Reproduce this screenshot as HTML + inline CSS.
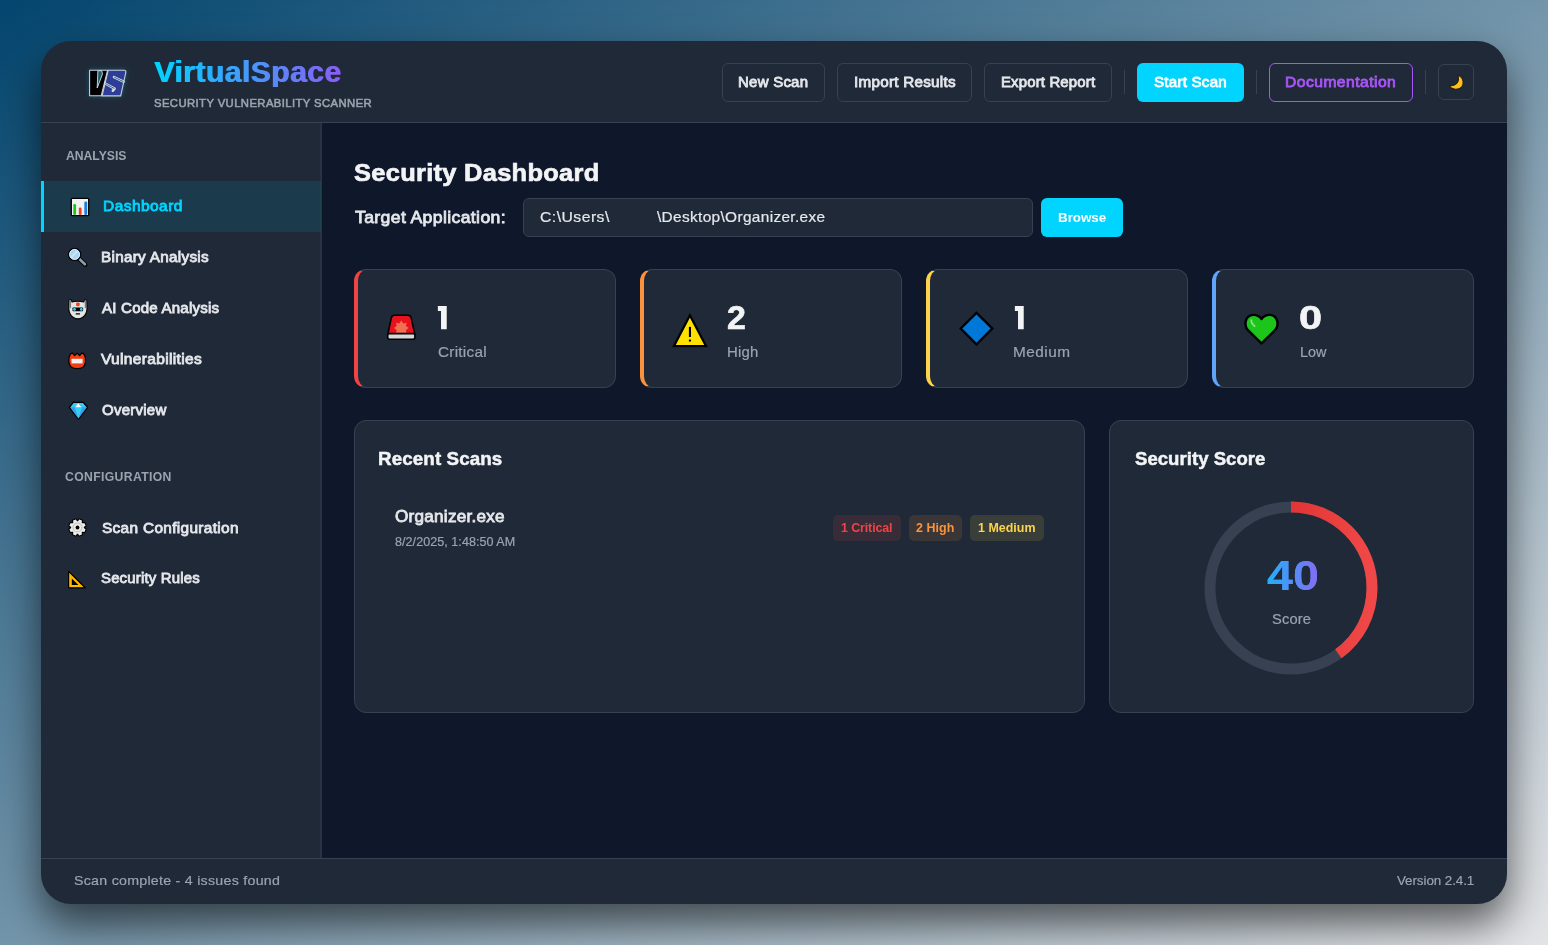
<!DOCTYPE html>
<html><head><meta charset="utf-8"><style>
html,body{margin:0;padding:0;}
body{width:1548px;height:945px;overflow:hidden;position:relative;background:linear-gradient(to bottom right,#03456e,#e3e4e6);font-family:"Liberation Sans",sans-serif;}
.win{position:absolute;left:41px;top:41px;width:1466px;height:863px;border-radius:30px;background:#1f2937;box-shadow:0 20px 40px rgba(0,0,0,0.6);overflow:hidden;}
.r{position:absolute;}
.t{position:absolute;white-space:pre;will-change:transform;}
.i{position:absolute;overflow:visible;}
</style></head><body>
<div class="win">
<div class="r" style="left:0px;top:81px;width:1466px;height:1px;background:#374151"></div>
<div class="r" style="left:281px;top:82px;width:1185px;height:735px;background:#0f172a"></div>
<div class="r" style="left:279px;top:82px;width:1px;height:735px;background:#27313f"></div>
<div class="r" style="left:280px;top:82px;width:1px;height:735px;background:#2a3344"></div>
<div class="r" style="left:0px;top:817px;width:1466px;height:1px;background:#374151"></div>
<div class="r" style="left:0px;top:140px;width:280px;height:51px;background:rgba(0,212,255,0.1)"></div>
<div class="r" style="left:0px;top:140px;width:3px;height:51px;background:#00d4ff"></div>
<div class="r" style="left:681px;top:22px;width:103px;height:39px;box-sizing:border-box;border:1px solid #374151;border-radius:6px;"></div>
<div class="r" style="left:796px;top:22px;width:135px;height:39px;box-sizing:border-box;border:1px solid #374151;border-radius:6px;"></div>
<div class="r" style="left:943px;top:22px;width:128px;height:39px;box-sizing:border-box;border:1px solid #374151;border-radius:6px;"></div>
<div class="r" style="left:1083px;top:29px;width:1px;height:24px;background:#374151"></div>
<div class="r" style="left:1096px;top:22px;width:107px;height:39px;background:#00d4ff;border-radius:6px"></div>
<div class="r" style="left:1215px;top:29px;width:1px;height:24px;background:#374151"></div>
<div class="r" style="left:1228px;top:22px;width:144px;height:39px;box-sizing:border-box;border:1px solid #a855f7;border-radius:6px"></div>
<div class="r" style="left:1384px;top:29px;width:1px;height:24px;background:#374151"></div>
<div class="r" style="left:1397px;top:23px;width:36px;height:36px;box-sizing:border-box;border:1px solid #374151;border-radius:6px;"></div>
<div class="r" style="left:482px;top:157px;width:510px;height:39px;box-sizing:border-box;background:#1f2937;border:1px solid #374151;border-radius:6px"></div>
<div class="r" style="left:1000px;top:157px;width:82px;height:39px;background:#00d4ff;border-radius:6px"></div>
<div class="r" style="left:313px;top:228px;width:262px;height:119px;box-sizing:border-box;background:#1f2937;border:1px solid #374151;border-left:4px solid #ef4444;border-radius:12px"></div>
<div class="r" style="left:599px;top:228px;width:262px;height:119px;box-sizing:border-box;background:#1f2937;border:1px solid #374151;border-left:4px solid #fb923c;border-radius:12px"></div>
<div class="r" style="left:885px;top:228px;width:262px;height:119px;box-sizing:border-box;background:#1f2937;border:1px solid #374151;border-left:4px solid #fcd34d;border-radius:12px"></div>
<div class="r" style="left:1171px;top:228px;width:262px;height:119px;box-sizing:border-box;background:#1f2937;border:1px solid #374151;border-left:4px solid #60a5fa;border-radius:12px"></div>
<div class="r" style="left:313px;top:379px;width:731px;height:293px;box-sizing:border-box;background:#1f2937;border:1px solid #374151;border-radius:12px"></div>
<div class="r" style="left:1068px;top:379px;width:365px;height:293px;box-sizing:border-box;background:#1f2937;border:1px solid #374151;border-radius:12px"></div>
<div class="r" style="left:792px;top:474px;width:68px;height:26px;background:rgba(239,68,68,0.12);border-radius:5px"></div>
<div class="r" style="left:868px;top:474px;width:53px;height:26px;background:rgba(251,146,60,0.12);border-radius:5px"></div>
<div class="r" style="left:929px;top:474px;width:74px;height:26px;background:rgba(252,211,77,0.12);border-radius:5px"></div>
<svg class="r" style="left:1160.4px;top:456.9px" width="180" height="180" viewBox="0 0 180 180">
<defs><linearGradient id="rg" x1="0" y1="0" x2="0" y2="1"><stop offset="0" stop-color="#d42222"/><stop offset="1" stop-color="#f04848"/></linearGradient></defs>
<circle cx="90" cy="90" r="81" fill="none" stroke="#374151" stroke-width="11"/>
<circle cx="90" cy="90" r="81" fill="none" stroke="url(#rg)" stroke-width="11" stroke-dasharray="203.58 508.94" transform="rotate(-90 90 90)"/>
</svg>
<svg class="r" style="left:395.64px;top:264.94px" width="11" height="24" viewBox="0 0 11 24"><path d="M0.86 5.09V0H9.73V23.36H4.03V5.09Z" fill="#f3f4f6"/></svg>
<svg class="r" style="left:972.74px;top:265.04px" width="11" height="24" viewBox="0 0 11 24"><path d="M0.86 5.09V0H9.73V23.36H4.03V5.09Z" fill="#f3f4f6"/></svg>
<svg class="i" style="left:43px;top:26px;overflow:visible" width="48" height="33" viewBox="0 0 48 33">
<defs><filter id="glow" x="-50%" y="-50%" width="200%" height="200%"><feGaussianBlur stdDeviation="2.5" result="b"/><feFlood flood-color="#00d4ff" flood-opacity="0.3"/><feComposite in2="b" operator="in"/><feMerge><feMergeNode/><feMergeNode in="SourceGraphic"/></feMerge></filter></defs>
<g filter="url(#glow)">
<path d="M5.6 3.2 L23.6 3.2 L17.2 28.8 L5.6 28.8 Z" fill="#000" stroke="#c9ced6" stroke-width="1.1" stroke-linejoin="round"/>
<path d="M13.9 3.7 L17.7 3.7 L18.5 6.9 L13.2 21.0 Z" fill="#1b5d6c" stroke="#d8dde4" stroke-width="0.9" stroke-linejoin="round"/>
<path d="M24.2 3.2 L40.0 3.2 Q42.3 3.2 41.8 5.5 L36.7 28.9 L18.1 28.9 Z" fill="#2f3e98" stroke="#c9ced6" stroke-width="1.1" stroke-linejoin="round"/>
<path d="M30.0 10.1 L39.6 14.7" stroke="#d8dde4" stroke-width="2.5" stroke-linecap="round"/>
<path d="M30.2 10.2 L39.4 14.6" stroke="#17606e" stroke-width="0.9"/>
<path d="M21.2 16.5 L30.6 21.6 L28.8 23.8" stroke="#d8dde4" stroke-width="2.5" stroke-linecap="round" fill="none" stroke-linejoin="round"/>
<path d="M21.4 16.6 L30.4 21.5" stroke="#17606e" stroke-width="0.9"/>
</g></svg>
<svg class="i" style="left:29px;top:155.5px;" width="20" height="20" viewBox="0 0 20 20"><rect x="1.3" y="1.3" width="17.4" height="17.4" rx="1" fill="#f2f2f2" stroke="#000" stroke-width="1.3"/>
<rect x="3.3" y="7" width="2.8" height="11" rx="1.2" fill="#22c31b"/>
<rect x="8.8" y="10.6" width="2.8" height="7.4" rx="1.2" fill="#f0401e"/>
<rect x="14.3" y="4.6" width="2.9" height="13.4" rx="1.2" fill="#1e7ee0"/></svg>
<svg class="i" style="left:26px;top:206px;" width="20" height="20" viewBox="0 0 20 20"><path d="M12.2 11.8 L18.2 17.6" stroke="#000" stroke-width="4.6" stroke-linecap="round"/>
<path d="M12.4 12 L17.9 17.3" stroke="#8e9ea6" stroke-width="2.6" stroke-linecap="round"/>
<circle cx="7.6" cy="7.4" r="6.0" fill="#a9d6f5" stroke="#000" stroke-width="1.4"/>
<circle cx="7.6" cy="7.4" r="5.0" fill="none" stroke="#f4f4f4" stroke-width="0.9"/>
<path d="M4.3 10.2 L10.6 3.9" stroke="#c6e6fa" stroke-width="2.2"/></svg>
<svg class="i" style="left:27px;top:257.5px;" width="20" height="20" viewBox="0 0 20 20"><path d="M1.0 1.6 Q1.4 0.3 2.6 0.5 Q3.6 0.8 3.9 2.9 Q9.9 1.5 15.9 2.9 Q16.2 0.8 17.2 0.5 Q18.4 0.3 18.8 1.6 L19.0 9.6 Q18.8 15.6 14.8 18.3 Q12.4 19.9 9.9 19.9 Q7.4 19.9 5.0 18.3 Q1.0 15.6 0.8 9.6 Z" fill="#e4e4e4" stroke="#000" stroke-width="1.1" stroke-linejoin="round"/>
<path d="M2.3 1.6 L2.3 8.6 M17.5 1.6 L17.5 8.6" stroke="#7a7a7a" stroke-width="1.5" stroke-linecap="round"/>
<rect x="8.1" y="3.4" width="3.6" height="3.9" rx="1.2" fill="#f0461a"/>
<rect x="4.5" y="8.5" width="10.6" height="3.8" rx="0.8" fill="#000"/>
<circle cx="6.5" cy="10.4" r="1.4" fill="#3ed2f6"/>
<circle cx="13.3" cy="10.4" r="1.4" fill="#3ed2f6"/>
<rect x="7.6" y="14.3" width="4.5" height="1.3" rx="0.6" fill="#000"/></svg>
<svg class="i" style="left:26px;top:310.5px;" width="20" height="20" viewBox="0 0 20 20"><path d="M2.0 6.0 Q3.0 1.2 5.5 1.2 L7.5 3.5 L10.1 1.2 L12.7 3.5 L14.7 1.2 Q17.4 1.2 18.4 6.0 Q19.2 12.2 16.2 15.0 Q13.8 16.6 10.2 16.6 Q6.6 16.6 4.2 15.0 Q1.2 12.2 2.0 6.0 Z" fill="#f23c12" stroke="#000" stroke-width="1.2" stroke-linejoin="round"/>
<rect x="4.5" y="6.8" width="11.1" height="4.6" fill="#f2f2f2"/></svg>
<svg class="i" style="left:26.5px;top:359.5px;" width="21" height="20" viewBox="0 0 21 20"><path d="M5.3 1.4 L15.3 1.4 L19.5 6.25 L10.4 18.2 L1.4 6.25 Z" fill="#34cdf4" stroke="#000" stroke-width="1.4" stroke-linejoin="round"/>
<path d="M2.0 6.25 L18.9 6.25 L10.4 17.5 Z" fill="#3a9be6"/>
<path d="M6.6 6.25 L14.2 6.25 L10.4 17.2 Z" fill="#33d0f5"/>
<path d="M7.4 6.25 L10.2 2.3 L13.2 6.25 Z" fill="#ffffff"/></svg>
<svg class="i" style="left:26.799999999999997px;top:476.79999999999995px;" width="19" height="19" viewBox="0 0 19 19"><polygon points="16.40,9.73 18.27,11.03 16.78,14.62 14.54,14.22 14.22,14.54 14.62,16.78 11.03,18.27 9.73,16.40 9.27,16.40 7.97,18.27 4.38,16.78 4.78,14.54 4.46,14.22 2.22,14.62 0.73,11.03 2.60,9.73 2.60,9.27 0.73,7.97 2.22,4.38 4.46,4.78 4.78,4.46 4.38,2.22 7.97,0.73 9.27,2.60 9.73,2.60 11.03,0.73 14.62,2.22 14.22,4.46 14.54,4.78 16.78,4.38 18.27,7.97 16.40,9.27" fill="#ececec" stroke="#000" stroke-width="1.1" stroke-linejoin="round"/>
<circle cx="9.5" cy="9.5" r="4.4" fill="none" stroke="#c8c8c8" stroke-width="1.4"/>
<circle cx="9.5" cy="9.5" r="1.9" fill="#000"/></svg>
<svg class="i" style="left:26px;top:528.5px;" width="20" height="20" viewBox="0 0 20 20"><path d="M1.6 1.4 L18.2 17.8 L1.6 17.8 Z" fill="#ffb800" stroke="#000" stroke-width="1.2" stroke-linejoin="round"/>
<path d="M4.8 8.6 L11.4 14.9 L4.8 14.9 Z" fill="#000"/></svg>
<svg class="i" style="left:344.2px;top:273px;" width="32" height="28" viewBox="0 0 32 28"><path d="M2.7 20.6 L6.4 3.6 Q6.9 1.2 9.6 1.2 L22.9 1.2 Q25.6 1.2 26.1 3.6 L29.9 20.6 Z" fill="#e8121f" stroke="#000" stroke-width="1.6" stroke-linejoin="round"/>
<polygon points="16.30,6.60 18.21,9.38 21.53,8.77 20.92,12.09 23.70,14.00 20.92,15.91 21.53,19.23 18.21,18.62 16.30,21.40 14.39,18.62 11.07,19.23 11.68,15.91 8.90,14.00 11.68,12.09 11.07,8.77 14.39,9.38" fill="#ef7152"/>
<rect x="2.7" y="19.6" width="27.2" height="5.6" rx="1.6" fill="#d6d8da" stroke="#000" stroke-width="1.6"/></svg>
<svg class="i" style="left:631px;top:271.5px;" width="36" height="36" viewBox="0 0 36 36"><path d="M17.9 0.3 L35.5 34.0 L0.4 34.0 Z" fill="#000" stroke="#000" stroke-width="0.3" stroke-linejoin="round"/>
<path d="M17.9 4.7 L32.2 31.9 L3.8 31.9 Z" fill="#ffe100"/>
<rect x="16.9" y="13.9" width="2.1" height="10.1" fill="#000"/>
<rect x="16.9" y="26.6" width="2.1" height="1.9" fill="#000"/></svg>
<svg class="i" style="left:917.5px;top:270px;" width="35" height="35" viewBox="0 0 35 35"><path d="M17.5 0.3 L35.0 17.6 L17.5 35.0 L0.1 17.6 Z" fill="#000"/>
<path d="M17.5 3.6 L31.6 17.6 L17.5 31.7 L3.4 17.6 Z" fill="#0078d7"/></svg>
<svg class="i" style="left:1203.2px;top:272px;" width="35" height="33" viewBox="0 0 35 33"><path d="M17.5 30.4 L4.0 17.2 Q0.9 13.8 1.6 9.0 Q2.8 2.4 9.2 1.9 Q14.4 1.8 17.5 6.0 Q20.6 1.8 25.8 1.9 Q32.2 2.4 33.4 9.0 Q34.1 13.8 31.0 17.2 Z" fill="#1cc51a" stroke="#000" stroke-width="2.4" stroke-linejoin="round"/>
<path d="M7.4 7.2 Q6.8 9.8 10.6 13.2" stroke="#8fe08c" stroke-width="1.8" fill="none" stroke-linecap="round"/></svg>
<svg class="i" style="left:1406.6px;top:32.599999999999994px;" width="16" height="16" viewBox="0 0 16 16"><path transform="translate(0.2 0) scale(1.07)" d="M9.2 1.2 Q14.6 3.6 13.8 9.4 Q12.4 14.4 6.6 14.2 Q3 13.8 1.2 11.2 Q5.4 11.4 8 9 Q10.6 6.2 9.2 1.2 Z" fill="#fcc21b" stroke="#1a1208" stroke-width="0.8" stroke-linejoin="round"/></svg>
<div class="t" style="left:113.70px;top:17.10px;font-size:29px;line-height:29px;font-weight:700;letter-spacing:0.408px;color:transparent;background:linear-gradient(90deg,#00d4ff,#8b5cf6);-webkit-background-clip:text;background-clip:text;padding-right:2px;transform-origin:0 0;transform:scaleX(1.0400);">VirtualSpace</div>
<div class="t" style="left:113.00px;top:17.10px;font-size:29px;line-height:29px;font-weight:700;letter-spacing:0.408px;color:transparent;background:linear-gradient(90deg,#00d4ff,#8b5cf6);-webkit-background-clip:text;background-clip:text;padding-right:2px;transform-origin:0 0;transform:scaleX(1.0400);">VirtualSpace</div>
<div class="t" style="left:113.00px;top:57.00px;font-size:11.3px;line-height:11.3px;font-weight:400;-webkit-text-stroke:0.55px #9ca3af;letter-spacing:0.401px;color:#9ca3af;">SECURITY VULNERABILITY SCANNER</div>
<div class="t" style="left:696.56px;top:34.30px;font-size:14.4px;line-height:14.4px;font-weight:400;-webkit-text-stroke:0.8px #e5e7eb;letter-spacing:0.242px;color:#e5e7eb;transform-origin:0 0;transform:scaleX(1.0410);">New Scan</div>
<div class="t" style="left:812.64px;top:34.30px;font-size:14.4px;line-height:14.4px;font-weight:400;-webkit-text-stroke:0.8px #e5e7eb;letter-spacing:0.254px;color:#e5e7eb;transform-origin:0 0;transform:scaleX(1.0572);">Import Results</div>
<div class="t" style="left:959.76px;top:34.30px;font-size:14.4px;line-height:14.4px;font-weight:400;-webkit-text-stroke:0.8px #e5e7eb;letter-spacing:0.168px;color:#e5e7eb;transform-origin:0 0;transform:scaleX(1.0357);">Export Report</div>
<div class="t" style="left:1113.00px;top:34.30px;font-size:14.4px;line-height:14.4px;font-weight:400;-webkit-text-stroke:0.8px #ffffff;letter-spacing:0.234px;color:#ffffff;transform-origin:0 0;transform:scaleX(1.0492);">Start Scan</div>
<div class="t" style="left:1244.01px;top:34.00px;font-size:14.4px;line-height:14.4px;font-weight:400;-webkit-text-stroke:0.8px #a855f7;letter-spacing:0.427px;color:#a855f7;transform-origin:0 0;transform:scaleX(1.0871);">Documentation</div>
<div class="t" style="left:24.60px;top:109.00px;font-size:12.2px;line-height:12.2px;font-weight:700;letter-spacing:-0.010px;color:#9ca3af;">ANALYSIS</div>
<div class="t" style="left:62.12px;top:158.00px;font-size:14.4px;line-height:14.4px;font-weight:400;-webkit-text-stroke:0.8px #00d4ff;letter-spacing:0.413px;color:#00d4ff;transform-origin:0 0;transform:scaleX(1.0770);">Dashboard</div>
<div class="t" style="left:60.14px;top:209.10px;font-size:14.4px;line-height:14.4px;font-weight:400;-webkit-text-stroke:0.8px #e5e7eb;letter-spacing:0.270px;color:#e5e7eb;transform-origin:0 0;transform:scaleX(1.0619);">Binary Analysis</div>
<div class="t" style="left:61.00px;top:260.20px;font-size:14.4px;line-height:14.4px;font-weight:400;-webkit-text-stroke:0.8px #e5e7eb;letter-spacing:0.212px;color:#e5e7eb;transform-origin:0 0;transform:scaleX(1.0456);">AI Code Analysis</div>
<div class="t" style="left:60.10px;top:311.20px;font-size:14.4px;line-height:14.4px;font-weight:400;-webkit-text-stroke:0.8px #e5e7eb;letter-spacing:0.308px;color:#e5e7eb;transform-origin:0 0;transform:scaleX(1.0786);">Vulnerabilities</div>
<div class="t" style="left:61.20px;top:362.00px;font-size:14.4px;line-height:14.4px;font-weight:400;-webkit-text-stroke:0.8px #e5e7eb;letter-spacing:0.237px;color:#e5e7eb;transform-origin:0 0;transform:scaleX(1.0428);">Overview</div>
<div class="t" style="left:24.30px;top:430.20px;font-size:12.2px;line-height:12.2px;font-weight:700;letter-spacing:0.366px;color:#9ca3af;">CONFIGURATION</div>
<div class="t" style="left:61.30px;top:479.50px;font-size:14.4px;line-height:14.4px;font-weight:400;-webkit-text-stroke:0.8px #e5e7eb;letter-spacing:0.310px;color:#e5e7eb;transform-origin:0 0;transform:scaleX(1.0691);">Scan Configuration</div>
<div class="t" style="left:60.00px;top:529.80px;font-size:14.4px;line-height:14.4px;font-weight:400;-webkit-text-stroke:0.8px #e5e7eb;letter-spacing:0.173px;color:#e5e7eb;transform-origin:0 0;transform:scaleX(1.0377);">Security Rules</div>
<div class="t" style="left:313.00px;top:120.10px;font-size:24.6px;line-height:24.6px;font-weight:700;-webkit-text-stroke:0.7px #f3f4f6;letter-spacing:0.293px;color:#f3f4f6;transform-origin:0 0;transform:scaleX(1.0334);">Security Dashboard</div>
<div class="t" style="left:314.00px;top:167.90px;font-size:16.4px;line-height:16.4px;font-weight:400;-webkit-text-stroke:0.8px #e5e7eb;letter-spacing:0.346px;color:#e5e7eb;transform-origin:0 0;transform:scaleX(1.0747);">Target Application:</div>
<div class="t" style="left:498.80px;top:169.00px;font-size:14.4px;line-height:14.4px;font-weight:400;-webkit-text-stroke:0.2px #e5e7eb;letter-spacing:0.427px;color:#e5e7eb;transform-origin:0 0;transform:scaleX(1.0934);">C:\Users\</div>
<div class="t" style="left:615.90px;top:169.00px;font-size:14.4px;line-height:14.4px;font-weight:400;-webkit-text-stroke:0.2px #e5e7eb;letter-spacing:0.315px;color:#e5e7eb;transform-origin:0 0;transform:scaleX(1.0707);">\Desktop\Organizer.exe</div>
<div class="t" style="left:1017.00px;top:170.40px;font-size:13.4px;line-height:13.4px;font-weight:700;letter-spacing:-0.045px;color:#ffffff;">Browse</div>
<div class="t" style="left:396.60px;top:304.30px;font-size:14.4px;line-height:14.4px;font-weight:400;-webkit-text-stroke:0.2px #9ca3af;letter-spacing:0.248px;color:#9ca3af;transform-origin:0 0;transform:scaleX(1.0634);">Critical</div>
<div class="t" style="left:686.47px;top:260.20px;font-size:33px;line-height:33px;font-weight:700;-webkit-text-stroke:0.6px #f3f4f6;letter-spacing:0.000px;color:#f3f4f6;transform-origin:0 0;transform:scaleX(1.0294);">2</div>
<div class="t" style="left:686.46px;top:303.60px;font-size:14.4px;line-height:14.4px;font-weight:400;-webkit-text-stroke:0.2px #9ca3af;letter-spacing:0.220px;color:#9ca3af;transform-origin:0 0;transform:scaleX(1.0358);">High</div>
<div class="t" style="left:972.33px;top:304.00px;font-size:14.4px;line-height:14.4px;font-weight:400;-webkit-text-stroke:0.2px #9ca3af;letter-spacing:0.427px;color:#9ca3af;transform-origin:0 0;transform:scaleX(1.0682);">Medium</div>
<div class="t" style="left:1258.34px;top:259.80px;font-size:33px;line-height:33px;font-weight:700;-webkit-text-stroke:0.6px #f3f4f6;letter-spacing:0.000px;color:#f3f4f6;transform-origin:0 0;transform:scaleX(1.2563);">0</div>
<div class="t" style="left:1258.60px;top:303.70px;font-size:14.4px;line-height:14.4px;font-weight:400;-webkit-text-stroke:0.2px #9ca3af;letter-spacing:-0.053px;color:#9ca3af;">Low</div>
<div class="t" style="left:337.09px;top:409.10px;font-size:18.5px;line-height:18.5px;font-weight:700;-webkit-text-stroke:0.5px #f3f4f6;letter-spacing:0.106px;color:#f3f4f6;transform-origin:0 0;transform:scaleX(1.0148);">Recent Scans</div>
<div class="t" style="left:354.00px;top:466.90px;font-size:16.4px;line-height:16.4px;font-weight:400;-webkit-text-stroke:0.8px #e5e7eb;letter-spacing:0.242px;color:#e5e7eb;transform-origin:0 0;transform:scaleX(1.0446);">Organizer.exe</div>
<div class="t" style="left:354.00px;top:495.20px;font-size:12.4px;line-height:12.4px;font-weight:400;-webkit-text-stroke:0.2px #9ca3af;letter-spacing:0.051px;color:#9ca3af;transform-origin:0 0;transform:scaleX(1.0124);">8/2/2025, 1:48:50 AM</div>
<div class="t" style="left:800.30px;top:481.40px;font-size:12.4px;line-height:12.4px;font-weight:700;letter-spacing:-0.089px;color:#ef4444;">1 Critical</div>
<div class="t" style="left:875.30px;top:481.40px;font-size:12.4px;line-height:12.4px;font-weight:700;letter-spacing:0.032px;color:#fb923c;transform-origin:0 0;transform:scaleX(1.0065);">2 High</div>
<div class="t" style="left:936.90px;top:481.40px;font-size:12.4px;line-height:12.4px;font-weight:700;letter-spacing:0.021px;color:#fcd34d;transform-origin:0 0;transform:scaleX(1.0039);">1 Medium</div>
<div class="t" style="left:1093.50px;top:408.70px;font-size:18.5px;line-height:18.5px;font-weight:700;-webkit-text-stroke:0.5px #f3f4f6;letter-spacing:0.025px;color:#f3f4f6;transform-origin:0 0;transform:scaleX(1.0038);">Security Score</div>
<div class="t" style="left:1226.30px;top:513.50px;font-size:42px;line-height:42px;font-weight:700;letter-spacing:0.000px;color:transparent;background:linear-gradient(90deg,#22b0fa,#8a68f2);-webkit-background-clip:text;background-clip:text;padding-right:2px;transform-origin:0 0;transform:scaleX(1.1112);">40</div>
<div class="t" style="left:1225.60px;top:513.50px;font-size:42px;line-height:42px;font-weight:700;letter-spacing:0.000px;color:transparent;background:linear-gradient(90deg,#22b0fa,#8a68f2);-webkit-background-clip:text;background-clip:text;padding-right:2px;transform-origin:0 0;transform:scaleX(1.1112);">40</div>
<div class="t" style="left:1231.10px;top:571.00px;font-size:14.4px;line-height:14.4px;font-weight:400;-webkit-text-stroke:0.2px #9ca3af;letter-spacing:0.128px;color:#9ca3af;transform-origin:0 0;transform:scaleX(1.0209);">Score</div>
<div class="t" style="left:32.60px;top:833.30px;font-size:13.4px;line-height:13.4px;font-weight:400;-webkit-text-stroke:0.2px #9ca3af;letter-spacing:0.247px;color:#9ca3af;transform-origin:0 0;transform:scaleX(1.0612);">Scan complete - 4 issues found</div>
<div class="t" style="left:1356.20px;top:833.00px;font-size:13.4px;line-height:13.4px;font-weight:400;-webkit-text-stroke:0.2px #9ca3af;letter-spacing:-0.077px;color:#9ca3af;">Version 2.4.1</div>
</div>
</body></html>
